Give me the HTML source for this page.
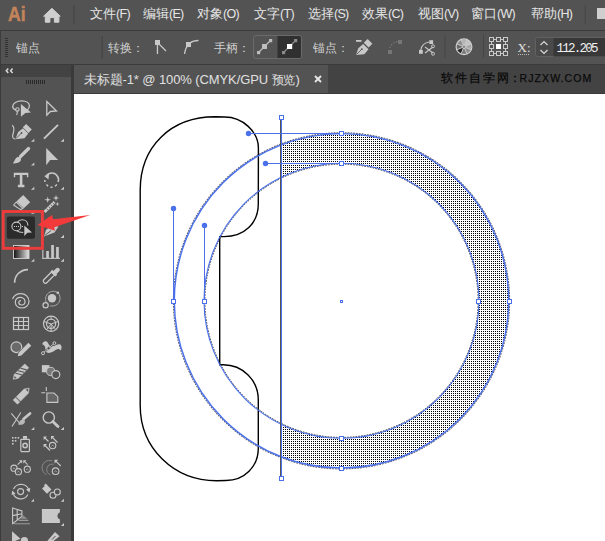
<!DOCTYPE html>
<html><head><meta charset="utf-8">
<style>
*{margin:0;padding:0;box-sizing:border-box}
html,body{width:605px;height:541px;overflow:hidden;background:#383838;font-family:"Liberation Sans",sans-serif}
.abs{position:absolute}
#menubar{left:0;top:0;width:605px;height:30px;background:#535353}
#ctrl{left:0;top:31px;width:605px;height:33px;background:#535353;border-left:1px solid #3d3d3d}
.mi{position:absolute;top:5.5px;font-size:12.5px;color:#e6e6e6;white-space:nowrap;line-height:16px}
.ct{position:absolute;top:39.5px;font-size:12px;color:#d0d0d0;white-space:nowrap;line-height:16px}
#tbhead{left:1px;top:65px;width:70px;height:12px;background:#434343}
#tbbody{left:1px;top:77px;width:70px;height:464px;background:#535353}
#tabbar{left:74px;top:65px;width:531px;height:28px;background:#434343}
#tab{left:74px;top:65px;width:254px;height:28px;background:#535353}
#canvas{left:74px;top:94px;width:531px;height:447px;background:#fff}
svg{position:absolute;left:0;top:0}
.lt{font-size:12.5px;letter-spacing:-0.7px}
</style></head><body>
<div id="menubar" class="abs"></div>
<div id="ctrl" class="abs"></div>
<div id="tbhead" class="abs"></div>
<div id="tbbody" class="abs"></div>
<div id="tabbar" class="abs"></div>
<div id="tab" class="abs"></div>
<div id="canvas" class="abs"></div>

<!-- menu -->
<div class="abs" style="left:8px;top:0.5px;font-size:21px;color:#c4845a;font-weight:bold;transform-origin:0 0;transform:scaleX(0.84);-webkit-text-stroke:0.5px #c4845a;line-height:25px">Ai</div>
<div class="mi" style="left:90px">文件<span class="lt">(F)</span></div>
<div class="mi" style="left:143px">编辑<span class="lt">(E)</span></div>
<div class="mi" style="left:197px">对象<span class="lt">(O)</span></div>
<div class="mi" style="left:254px">文字<span class="lt">(T)</span></div>
<div class="mi" style="left:308px">选择<span class="lt">(S)</span></div>
<div class="mi" style="left:362px">效果<span class="lt">(C)</span></div>
<div class="mi" style="left:418px">视图<span class="lt">(V)</span></div>
<div class="mi" style="left:471px">窗口<span class="lt">(W)</span></div>
<div class="mi" style="left:531px">帮助<span class="lt">(H)</span></div>

<!-- control bar text -->
<div class="ct" style="left:15.5px">锚点</div>
<div class="ct" style="left:108.2px">转换：</div>
<div class="ct" style="left:214px">手柄：</div>
<div class="ct" style="left:312.5px">锚点：</div>

<!-- tab text -->
<div class="abs" style="left:83.8px;top:71.5px;font-size:13px;color:#e0e0e0;white-space:nowrap;letter-spacing:-0.1px"><span style="font-size:12.5px">未标题</span>-1* @ 100% (CMYK/GPU <span style="font-size:12px">预览</span>)</div>
<div class="abs" style="left:441px;top:71px;font-size:11.5px;color:#0a0a0a;white-space:nowrap;letter-spacing:2px;line-height:14px;-webkit-text-stroke:0.25px #0a0a0a">软件自学网<span style="letter-spacing:-1px;margin-left:-2.5px">：</span><span style="font-size:10.5px;letter-spacing:1.1px">RJZXW.COM</span></div>

<!-- chrome svg (menubar/control icons) -->
<svg width="605" height="541" viewBox="0 0 605 541">
  <!-- menubar -->
  <path d="M43.6 16.2 L51.9 8.3 L60.2 16.2 H58.9 V22.2 H54.4 V17.6 H49.9 V22.2 H45.3 V16.2Z" fill="#cfcfcf" stroke="#cfcfcf" stroke-width="1" stroke-linejoin="round"/>
  <rect x="73" y="5" width="2" height="19.5" fill="#4a4a4a"/>
  <rect x="584.5" y="5" width="1.5" height="19.5" fill="#4a4a4a"/>
  <rect x="597" y="8" width="8" height="11" fill="#cfcfcf"/>
  <rect x="0" y="30" width="605" height="1" fill="#3b3b3b"/>
  <rect x="0" y="64" width="605" height="1" fill="#3b3b3b"/><rect x="74" y="93" width="531" height="1" fill="#3a3a3a"/>
  <!-- grip -->
  <g fill="#333"><rect x="5" y="38" width="3" height="1"/><rect x="5" y="40" width="3" height="1"/><rect x="5" y="42" width="3" height="1"/><rect x="5" y="44" width="3" height="1"/><rect x="5" y="46" width="3" height="1"/><rect x="5" y="48" width="3" height="1"/><rect x="5" y="50" width="3" height="1"/><rect x="5" y="52" width="3" height="1"/><rect x="5" y="54" width="3" height="1"/><rect x="5" y="56" width="3" height="1"/></g>
  <rect x="101.5" y="36" width="1.5" height="23" fill="#474747"/>
  <!-- convert icons -->
  <g fill="#c8c8c8" stroke="none">
    <rect x="155" y="40" width="5" height="5"/>
    <rect x="156.8" y="44" width="1.3" height="10"/>
  </g>
  <path d="M159 44 L166 51" stroke="#c8c8c8" stroke-width="1.3"/>
  <rect x="186" y="42" width="5" height="5" fill="#c8c8c8"/>
  <path d="M184.5 54 Q185.5 48 187.5 46 M190 43 Q193 40.5 198.5 40.5" stroke="#c8c8c8" stroke-width="1.3" fill="none"/>
  <!-- handle group -->
  <rect x="253.5" y="35.5" width="48" height="23" rx="2.5" fill="none" stroke="#6a6a6a"/>
  <path d="M277.5 36 H299 Q301 36 301 38 V56 Q301 58 299 58 H277.5Z" fill="#303030"/>
  <path d="M258.5 52.5 L270.5 40.5" stroke="#bdbdbd" stroke-width="1.2"/>
  <rect x="257" y="51" width="3.2" height="3.2" fill="#bdbdbd"/>
  <rect x="262" y="44" width="5" height="5" fill="#bdbdbd"/>
  <rect x="269" y="39" width="3.2" height="3.2" fill="#bdbdbd"/>
  <path d="M283.5 52.5 L295.5 40.5" stroke="#8a8a8a" stroke-width="1.2"/>
  <rect x="282" y="51" width="3.2" height="3.2" fill="#8a8a8a"/>
  <rect x="294" y="39" width="3.2" height="3.2" fill="#8a8a8a"/>
  <rect x="287" y="44" width="5.2" height="5" fill="#ffffff"/>
  <!-- pen minus -->
  <rect x="356" y="40" width="5.5" height="1.8" fill="#c8c8c8"/>
  <path d="M356 55 L358.3 48.2 L363.2 44 L368.5 49.3 L364.3 54.2Z" fill="#c8c8c8"/>
  <path d="M363.8 42.8 L367.6 39 L372.4 43.8 L368.6 47.6Z" fill="#c8c8c8"/>
  <path d="M356.5 54.5 L361.5 49.5" stroke="#535353" stroke-width="0.9"/>
  <circle cx="361.8" cy="49.2" r="0.9" fill="#535353"/>
  <!-- disabled dotted curve -->
  <g fill="#777777"><rect x="388" y="50" width="4" height="4"/><rect x="398" y="40" width="4" height="4"/><rect x="389.5" y="46.5" width="1.3" height="1.3"/><rect x="391" y="44" width="1.3" height="1.3"/><rect x="393.5" y="42" width="1.3" height="1.3"/><rect x="396" y="41" width="1.3" height="1.3"/></g>
  <!-- curve scissors -->
  <rect x="419" y="50" width="3.8" height="3.8" fill="#c8c8c8"/>
  <rect x="429.3" y="40.2" width="3.8" height="3.8" fill="#c8c8c8"/>
  <path d="M420.8 50 Q422 43 429.3 42" stroke="#c8c8c8" stroke-width="1.2" fill="none"/>
  <path d="M425 47 L433 53 M425 53 L433 47" stroke="#c8c8c8" stroke-width="1.1"/>
  <circle cx="433" cy="46.3" r="1.5" fill="none" stroke="#c8c8c8" stroke-width="1"/>
  <circle cx="433" cy="53.7" r="1.5" fill="none" stroke="#c8c8c8" stroke-width="1"/>
  <rect x="444.5" y="35" width="1" height="23" fill="#464646"/>
  <!-- globe -->
  <path d="M464.0 46.8 L461.09 39.78 A7.6 7.6 0 0 1 466.91 39.78Z" fill="#b4b4b4"/>
  <path d="M464.0 46.8 L466.91 39.78 A7.6 7.6 0 0 1 471.02 43.89Z" fill="#c4c4c4"/>
  <path d="M464.0 46.8 L471.02 43.89 A7.6 7.6 0 0 1 471.02 49.71Z" fill="#a8a8a8"/>
  <path d="M464.0 46.8 L471.02 49.71 A7.6 7.6 0 0 1 466.91 53.82Z" fill="#8e8e8e"/>
  <path d="M464.0 46.8 L466.91 53.82 A7.6 7.6 0 0 1 461.09 53.82Z" fill="#7a7a7a"/>
  <path d="M464.0 46.8 L461.09 53.82 A7.6 7.6 0 0 1 456.98 49.71Z" fill="#262626"/>
  <path d="M464.0 46.8 L456.98 49.71 A7.6 7.6 0 0 1 456.98 43.89Z" fill="#6a6a6a"/>
  <path d="M464.0 46.8 L456.98 43.89 A7.6 7.6 0 0 1 461.09 39.78Z" fill="#8c8c8c"/>
  <path d="M463.31 45.14 L461.09 39.78 M464.69 45.14 L466.91 39.78 M465.66 46.11 L471.02 43.89 M465.66 47.49 L471.02 49.71 M464.69 48.46 L466.91 53.82 M463.31 48.46 L461.09 53.82 M462.34 47.49 L456.98 49.71 M462.34 46.11 L456.98 43.89 " stroke="#d0d0d0" stroke-width="0.9"/>
  <circle cx="464.0" cy="46.8" r="7.8999999999999995" fill="none" stroke="#d0d0d0" stroke-width="1.2"/>
  <circle cx="464.0" cy="46.8" r="1.8" fill="#8a8a8a" stroke="#d0d0d0" stroke-width="0.9"/>
  <rect x="483" y="35" width="1" height="23" fill="#464646"/>
  <!-- ref point grid -->
  <g fill="none" stroke="#c8c8c8" stroke-width="1">
    <rect x="489.5" y="37.5" width="4" height="4"/><rect x="496.5" y="37.5" width="4" height="4"/><rect x="503.5" y="37.5" width="4" height="4"/>
    <rect x="489.5" y="44.5" width="4" height="4"/><rect x="503.5" y="44.5" width="4" height="4"/>
    <rect x="489.5" y="51.5" width="4" height="4"/><rect x="496.5" y="51.5" width="4" height="4"/><rect x="503.5" y="51.5" width="4" height="4"/>
  </g>
  <path d="M493.5 39.5 H496.5 M500.5 39.5 H503.5 M493.5 53.5 H496.5 M500.5 53.5 H503.5 M491.5 41.5 V44.5 M491.5 48.5 V51.5 M505.5 41.5 V44.5 M505.5 48.5 V51.5" stroke="#c8c8c8" stroke-width="1"/>
  <rect x="496" y="44" width="5" height="5" fill="#ffffff"/>
  <!-- X: -->
  <text x="517.5" y="52" font-family="Liberation Serif" font-size="13" fill="#e0e0e0">X:</text>
  <path d="M518 54.5 H529" stroke="#bbbbbb" stroke-width="1" stroke-dasharray="1 1"/>
  <!-- spinner + input -->
  <rect x="535.5" y="37.5" width="70" height="19" rx="2" fill="#4a4a4a" stroke="#616161"/>
  <rect x="553.5" y="38" width="52" height="18.5" fill="#383838"/>
  <path d="M540.5 45 L544 41.5 L547.5 45 M540.5 50 L544 53.5 L547.5 50" stroke="#d8d8d8" stroke-width="1.2" fill="none"/>
  <text x="556.5" y="51.5" font-family="Liberation Mono" font-size="12.5" fill="#f0f0f0" textLength="42">112.205</text>

  <!-- toolbar header -->
  <rect x="0" y="64" width="1" height="477" fill="#3b3b3b"/>
  <rect x="71" y="65" width="3" height="476" fill="#3a3a3a"/>
  <path d="M8.3 68.6 L6.3 70.8 L8.3 73 M12.6 68.6 L10.6 70.8 L12.6 73" stroke="#d8d8d8" stroke-width="1.5" fill="none"/>
  <g fill="#2a2a2a"><rect x="26" y="80" width="1" height="4"/><rect x="28" y="80" width="1" height="4"/><rect x="30" y="80" width="1" height="4"/><rect x="32" y="80" width="1" height="4"/><rect x="34" y="80" width="1" height="4"/><rect x="36" y="80" width="1" height="4"/><rect x="38" y="80" width="1" height="4"/><rect x="40" y="80" width="1" height="4"/><rect x="42" y="80" width="1" height="4"/><rect x="44" y="80" width="1" height="4"/></g>
  <!-- tab close -->
  <path d="M315 76 L321 82 M321 76 L315 82" stroke="#e8e8e8" stroke-width="1.8"/>
</svg>

<!-- toolbar icons -->
<svg width="605" height="541" viewBox="0 0 605 541">
<g fill="#c8c8c8" stroke="none">
  <!-- small corner triangles -->
  <path d="M31 141.8 L34.3 138.7 V141.8Z M60.6 141.8 L64 138.7 V141.8Z"/>
  <path d="M31 165.6 L34.3 162.5 V165.6Z"/>
  <path d="M31 189.8 L34.3 186.7 V189.8Z M60.6 189.8 L64 186.7 V189.8Z"/>
  <path d="M31 213.8 L34.3 210.7 V213.8Z M60.6 237.9 L64 234.7 V237.9Z"/>
  <path d="M31 261.8 L34.3 258.7 V261.8Z M60.6 261.8 L64 258.7 V261.8Z"/>
  <path d="M31 430 L34.3 427 V430Z M60.6 430 L64 427 V430Z"/>
  <path d="M31 501.8 L34 498.8 V501.8Z M60.9 501.8 L64 498.8 V501.8Z"/>
  <path d="M60.9 526 L64 523 V526Z"/>
</g>
<!-- Row1: lasso w/ arrow -->
<path d="M16 110.2 C14 109.5 12.7 108.3 12.7 106.6 C12.7 103.2 16.8 100.9 21.6 100.9 C26.3 100.9 29.4 103 29.4 105.8 C29.4 107.6 28.6 109 27.2 110.3" fill="none" stroke="#c8c8c8" stroke-width="1.3"/>
<circle cx="17.4" cy="109.4" r="1.7" fill="none" stroke="#c8c8c8" stroke-width="1.1"/>
<path d="M17 111 Q18 113 16.5 115" fill="none" stroke="#c8c8c8" stroke-width="1.2"/>
<path d="M20.9 103.9 L31 112.4 L25.4 112.9 L20.9 116.8Z" fill="#c8c8c8"/>
<!-- direct selection -->
<path d="M46.8 101.5 L56.5 111 L50.4 111.5 L46.8 115.2Z" fill="none" stroke="#c8c8c8" stroke-width="1.3" stroke-linejoin="miter"/>
<!-- Row2: pen -->
<path d="M12.2 125.3 C14.5 127 14 131 13 134 C12 137 13 139 15.2 139" fill="none" stroke="#c8c8c8" stroke-width="1.2"/>
<path d="M15.2 139.3 L18.2 132 L23 128.3 L28.2 133.5 L24.5 138.2Z" fill="#c8c8c8"/>
<path d="M22.8 127.3 L26.2 124 L31.8 129.6 L28.4 133Z" fill="#c8c8c8"/>
<path d="M15.8 138.7 L21.2 133.3" stroke="#535353" stroke-width="0.9"/>
<circle cx="21.5" cy="133" r="0.9" fill="#535353"/>
<!-- line -->
<path d="M44 138.6 L58 124.9" stroke="#c8c8c8" stroke-width="1.9"/>
<!-- Row3: brush -->
<path d="M20.5 156.5 L28.6 148.5" stroke="#c8c8c8" stroke-width="3.2" stroke-linecap="round"/>
<path d="M13 163.4 C14.5 161 15.5 157.5 18 157 C20.5 156.5 21.5 158.5 20.8 160.5 C19.5 163 16 163.5 13 163.4Z" fill="#c8c8c8"/>
<!-- solid arrow -->
<path d="M46.2 148 L58.1 159.9 L50.2 159.9 L46.2 165.3Z" fill="#c8c8c8"/>
<!-- Row4: T -->
<path d="M13.8 172.8 H28.3 V177.3 H26.9 V175 H22.4 V184.7 H24.4 V187.2 H17.9 V184.7 H19.8 V175 H15.2 V177.3 H13.8Z" fill="#c8c8c8"/>
<!-- rotate -->
<path d="M46.5 175.5 C49 172.5 54 172 56.5 175 C59 178 58.5 181 58 182" fill="none" stroke="#c8c8c8" stroke-width="1.6"/>
<path d="M44.2 176 L49 174 L48.5 179.5Z" fill="#c8c8c8"/>
<path d="M57 184.5 L55 186.3 M52.5 187.3 L50.5 187.3 M48 186.3 L46.5 184.5 M45 182 L44.8 180" stroke="#c8c8c8" stroke-width="1.4"/>
<!-- Row5: eraser -->
<path d="M23.2 195 L30.2 202.3 L23.8 208.2 L16.6 201.2Z" fill="#c8c8c8"/>
<path d="M16.3 202 L23 208.6 L20.6 209.6 L13.6 205Z" fill="none" stroke="#c8c8c8" stroke-width="1.1" stroke-linejoin="round"/>
<!-- magic wand -->
<path d="M44.5 212 L54.5 202" stroke="#c8c8c8" stroke-width="2.8"/>
<path d="M46.5 208.5 L48 210 M48.5 206.5 L50 208 M50.5 204.5 L52 206 M52.5 202.5 L54 204" stroke="#535353" stroke-width="0.7"/>
<path d="M47.70 196.50 L48.41 199.09 L51.00 199.80 L48.41 200.51 L47.70 203.10 L46.99 200.51 L44.40 199.80 L46.99 199.09Z M56.00 194.80 L56.71 197.29 L59.20 198.00 L56.71 198.71 L56.00 201.20 L55.29 198.71 L52.80 198.00 L55.29 197.29Z M57.40 201.80 L57.97 203.43 L59.60 204.00 L57.97 204.57 L57.40 206.20 L56.83 204.57 L55.20 204.00 L56.83 203.43Z" fill="#c8c8c8"/>
<!-- Row6: selected -->
<rect x="6.8" y="216.6" width="28.2" height="22.2" rx="2" fill="#2b2b2b"/>
<ellipse cx="16.4" cy="226.4" rx="4.5" ry="4.3" fill="none" stroke="#c8c8c8" stroke-width="1.1"/>
<path d="M17.6 222.1 C18.6 220.3 20.2 219.7 22.2 219.7 C25.6 219.7 27.9 222.2 27.9 225.6 M16.8 230.9 C18.3 232.1 20.5 232.5 23.2 232.5" fill="none" stroke="#c8c8c8" stroke-width="1.1"/>
<g fill="#d0d0d0"><rect x="14" y="226" width="1" height="1"/><rect x="16" y="226" width="1" height="1"/><rect x="18" y="226" width="1" height="1"/><rect x="22" y="226" width="1" height="1"/></g>
<path d="M24.3 225.4 L32 232.5 L27.4 232.7 L24.3 236Z" fill="#c8c8c8"/>
<!-- blob brush (right of selected) -->
<path d="M44 236.5 L46 230 L51.5 225.5 L58.5 226.5 L54.5 232.5Z" fill="#c8c8c8"/>
<path d="M44.8 235.5 L51 230.5" stroke="#535353" stroke-width="0.9"/>
<!-- Row7: gradient -->
<defs><linearGradient id="gr" x1="0" x2="1" y1="0" y2="0"><stop offset="0" stop-color="#111"/><stop offset="1" stop-color="#e6e6e6"/></linearGradient></defs>
<rect x="13.5" y="245.5" width="15.5" height="13" fill="url(#gr)" stroke="#c8c8c8" stroke-width="1"/>
<!-- bar chart -->
<g fill="#c8c8c8"><rect x="42.3" y="249.5" width="1.1" height="9.3"/><rect x="42.3" y="257.8" width="17.7" height="1.1"/><rect x="46.2" y="251" width="2.7" height="7"/><rect x="51.2" y="245" width="2.7" height="13"/><rect x="56.1" y="247" width="2.7" height="11"/></g>
<!-- Row8: arc -->
<path d="M14.6 282.8 C14.6 275.5 20 269.8 28 269.6" fill="none" stroke="#c8c8c8" stroke-width="1.6"/>
<!-- eyedropper -->
<path d="M44.5 283 C43 282 43 280.5 44 279.5 L51.5 272 L54.5 275 L47 282.5 C46 283.5 45 283.5 44.5 283Z" fill="none" stroke="#c8c8c8" stroke-width="1.3"/>
<path d="M50.5 271.5 L55.5 276.5 L57.2 274.8 L52.2 269.8Z M53.5 271 L56 268.5 C57 267.5 58.5 267.5 59.3 268.5 C60 269.3 60 270.5 59 271.5 L56.5 274Z" fill="#c8c8c8"/>
<!-- Row9: spiral -->
<path d="M12.5 299 C14 295.5 17.5 293.5 21.5 293.7 C26 294 29 297.5 29 301.5 C29 305.5 25.5 308 21.8 308 C18 308 15.3 305.5 15.3 302 C15.3 299 17.7 297.2 20.5 297.3 C23.2 297.4 25 299.5 25 301.8 C25 304 23.2 305 21.5 305 C19.8 305 18.8 303.8 18.8 302.3 C18.8 301 19.8 300.5 21 300.6" fill="none" stroke="#c8c8c8" stroke-width="1.2"/>
<!-- planet -->
<circle cx="52" cy="298.3" r="4.2" fill="#c8c8c8"/>
<path d="M47.8 304.5 C45 302 44.8 297 47.5 293.8 C50.5 290.5 56 290.5 58.5 293.5 C61 296.5 60.5 302 57 304.5 C55 306 52 306.3 50 305.8" fill="none" stroke="#a8a8a8" stroke-width="1"/>
<circle cx="45.6" cy="305.2" r="2.6" fill="#535353" stroke="#c8c8c8" stroke-width="1.2"/>
<circle cx="57.8" cy="292.8" r="1.3" fill="#c8c8c8"/>
<!-- Row10: grid -->
<g fill="none" stroke="#c8c8c8" stroke-width="1.2">
<rect x="13.5" y="317.5" width="15" height="12"/>
<path d="M13.5 321.5 H28.5 M13.5 325.5 H28.5 M18.5 317.5 V329.5 M23.5 317.5 V329.5"/>
</g>
<!-- polar grid -->
<g fill="none" stroke="#c8c8c8" stroke-width="1.2">
<circle cx="51.1" cy="323.8" r="7.6"/>
<circle cx="51.1" cy="323.8" r="4.6"/>
<path d="M51.1 324 V331.4 M44 321.5 L51.1 324 L58.2 321.5 M46.5 329.5 L51.1 324 L55.7 329.5 M51.1 316.2 V319.2" stroke-width="1"/>
</g>
<!-- Row11: shaper -->
<circle cx="16.4" cy="347.2" r="5.4" fill="#6a6a6a" stroke="#c8c8c8" stroke-width="1.2"/>
<path d="M17.80 356.30 L18.51 352.76 L28.41 342.86 L31.24 345.69 L21.34 355.59Z" fill="#c8c8c8" stroke="#535353" stroke-width="1.2" stroke-linejoin="round"/>
<path d="M17.80 356.30 L18.51 352.76 L28.41 342.86 L31.24 345.69 L21.34 355.59Z" fill="#c8c8c8"/>
<!-- puppet warp -->
<path d="M42.3 344.3 C42.8 341 46.8 340 48 343 C48.8 345 50.2 346.6 53 346.1 C56 345.6 57.6 343.4 60.2 344.4 C62.2 345.4 61.8 349 60.6 350.6 C59.6 348.6 57.6 348.6 55.6 350.1 C53.1 352.1 50 353.6 47 352.6 C44.6 351.6 45.6 348.6 45.1 347.1 C44.6 345.6 43.6 344.9 42.3 344.3Z" fill="#c8c8c8"/>
<path d="M43.2 352.8 L54.3 343.2" stroke="#535353" stroke-width="2"/>
<path d="M43.2 352.8 L54.3 343.2" stroke="#c8c8c8" stroke-width="0.9"/>
<circle cx="43" cy="353.2" r="1.5" fill="#535353" stroke="#c8c8c8" stroke-width="1"/>
<circle cx="48.6" cy="348.3" r="1.7" fill="#535353" stroke="#c8c8c8" stroke-width="1"/>
<circle cx="54.4" cy="343.1" r="1.4" fill="#535353" stroke="#c8c8c8" stroke-width="1"/>
<!-- Row12: smooth pencil -->
<path d="M13.30 379.30 L14.18 374.53 L24.79 363.92 L28.68 367.81 L18.07 378.42Z" fill="#c8c8c8" stroke="#c8c8c8" stroke-width="0.6" stroke-linejoin="round"/>
<path d="M15.53 373.18 L21.68 374.81 M18.00 370.71 L24.15 372.33 M20.48 368.23 L26.63 369.86 " stroke="#535353" stroke-width="1.1"/>
<path d="M14.22 378.38 L16.55 378.03 L14.57 376.05Z" fill="#535353"/>
<!-- live paint -->
<rect x="41.9" y="365.1" width="7.5" height="7.2" fill="#c8c8c8"/>
<circle cx="50.7" cy="371.4" r="4.1" fill="#777" stroke="#c8c8c8" stroke-width="1"/>
<circle cx="55.8" cy="374.6" r="4" fill="#535353" stroke="#c8c8c8" stroke-width="1.2"/>
<!-- Row13: pencil -->
<path d="M29.20 388.20 L24.11 389.05 L16.33 396.83 L20.57 401.07 L28.35 393.29Z M15.48 397.68 L13.22 399.94 L17.46 404.18 L19.72 401.92Z" fill="#c8c8c8" stroke="#c8c8c8" stroke-width="0.6" stroke-linejoin="round"/>
<path d="M28.35 389.05 L27.93 391.74 L25.66 389.47Z" fill="#535353"/>
<!-- artboard -->
<path d="M46.3 387 V391 M41.3 392.7 H45.3" stroke="#c8c8c8" stroke-width="1.1"/>
<path d="M46.9 393 H54 L57.8 396.7 V402.4 H46.9Z" fill="#666" stroke="#c8c8c8" stroke-width="1.1"/>
<!-- Row14: scissor+brush -->
<path d="M11.3 413.3 L19 422.5 M20.8 412.5 L12 426.5" stroke="#c8c8c8" stroke-width="1.1"/>
<path d="M23.5 419 L30 413.5" stroke="#c8c8c8" stroke-width="2.8" stroke-linecap="round"/>
<path d="M18 424.5 C19 421.5 20.5 419.5 23 419.5 C25 419.5 25.5 421.5 24.5 423 C23 425 20.5 425 18 424.5Z" fill="#b8b8b8"/>
<!-- zoom -->
<circle cx="48.8" cy="417.5" r="5.6" fill="none" stroke="#c8c8c8" stroke-width="1.4"/>
<path d="M52.8 421.6 L58 426.6" stroke="#c8c8c8" stroke-width="2.8" stroke-linecap="round"/>
<!-- Row15: spray -->
<g fill="#c8c8c8"><rect x="12" y="437" width="1.6" height="1.6"/><rect x="14.8" y="437" width="1.6" height="1.6"/><rect x="17.6" y="437" width="1.6" height="1.6"/><rect x="12" y="440" width="1.6" height="1.6"/><rect x="14.8" y="440" width="1.6" height="1.6"/><rect x="12" y="443" width="1.6" height="1.6"/><rect x="23" y="436" width="4" height="2.8"/></g>
<rect x="20.8" y="439.3" width="8.6" height="12.3" rx="0.8" fill="none" stroke="#c8c8c8" stroke-width="1.2"/>
<circle cx="25.1" cy="445.5" r="2.2" fill="none" stroke="#c8c8c8" stroke-width="1.4"/>
<!-- shifter -->
<g stroke="#c8c8c8" stroke-width="1.1" fill="none">
<path d="M44.5 437.5 L48.5 441.5 M52 437 L57.5 442.5 M44.5 445 L50 450.5"/>

</g>
<path d="M43.6 436.6 H47 L43.6 440Z M51 436 H54.4 L51 439.4Z M43.6 444 H47 L43.6 447.4Z" fill="#c8c8c8"/>
<circle cx="52.6" cy="445.6" r="3.2" fill="#535353" stroke="#c8c8c8" stroke-width="1.1"/><path d="M51.4 446.20000000000005 Q52.6 444.40000000000003 53.800000000000004 446.20000000000005" fill="none" stroke="#c8c8c8" stroke-width="0.7"/>
<!-- Row16: scrunch -->
<circle cx="14" cy="468.2" r="3.1" fill="#535353" stroke="#c8c8c8" stroke-width="1.1"/><path d="M12.8 468.8 Q14 467.0 15.2 468.8" fill="none" stroke="#c8c8c8" stroke-width="0.7"/><circle cx="18.4" cy="471.7" r="3.1" fill="#535353" stroke="#c8c8c8" stroke-width="1.1"/><path d="M17.2 472.3 Q18.4 470.5 19.599999999999998 472.3" fill="none" stroke="#c8c8c8" stroke-width="0.7"/><circle cx="27.3" cy="469.2" r="3.1" fill="#535353" stroke="#c8c8c8" stroke-width="1.1"/><path d="M26.1 469.8 Q27.3 468.0 28.5 469.8" fill="none" stroke="#c8c8c8" stroke-width="0.7"/>
<path d="M17.6 464.6 L21.3 461.2 M27.6 464.6 L24.2 461.2" stroke="#c8c8c8" stroke-width="1.1"/>
<path d="M22.2 460.2 V463.4 L19 460.2Z M23.3 460.2 H26.5 L23.3 463.4Z" fill="#c8c8c8"/>
<!-- sizer -->
<path d="M46.5 474.5 C41.5 472.5 40.5 465.5 44.8 462 C47 460.3 49.8 460 52.2 460.8 M50.5 474.8 C46.8 473.5 45.5 469 48 466 C49.3 464.4 51.5 463.8 53.5 464.3" fill="none" stroke="#8a8a8a" stroke-width="1"/>
<circle cx="55.6" cy="471.2" r="3.3" fill="#535353" stroke="#c8c8c8" stroke-width="1.1"/><path d="M54.4 471.8 Q55.6 470.0 56.800000000000004 471.8" fill="none" stroke="#c8c8c8" stroke-width="0.7"/>
<path d="M55.5 460.8 L60.8 466" stroke="#c8c8c8" stroke-width="1.1"/>
<path d="M54.5 459.8 H58.2 L54.5 463.5Z" fill="#c8c8c8"/>
<!-- Row17: spinner -->
<path d="M13.5 489 C15 485.5 19 484 22.5 484.5 C25.5 485 27.5 487 28.5 489 M27.8 494.5 C26.5 497.5 23 499.3 19.5 498.8 C16.5 498.3 14.3 496.5 13.5 494.3" fill="none" stroke="#c8c8c8" stroke-width="1.2"/>
<path d="M26 489.5 L30.3 488 L29.5 492.5Z M15.5 493.8 L11.5 495 L12.3 490.5Z" fill="#c8c8c8"/>
<circle cx="20.6" cy="491.6" r="3" fill="none" stroke="#c8c8c8" stroke-width="1.1"/>
<!-- stainer -->
<path d="M42 488.5 L46.5 484.5 L51.5 489.5 L47 493.8Z" fill="#c8c8c8"/>
<rect x="44.5" y="484" width="2.5" height="2.5" fill="#c8c8c8" transform="rotate(45 45.7 485.2)"/>
<circle cx="53" cy="495.2" r="3" fill="#535353" stroke="#c8c8c8" stroke-width="1.1"/>
<circle cx="57.3" cy="492" r="3" fill="#535353" stroke="#c8c8c8" stroke-width="1.1"/>
<!-- Row18: perspective grid -->
<g fill="none" stroke="#c8c8c8" stroke-width="1.1">
<path d="M12.6 507.9 V523.7 L21.9 516.5 V511 Z M17.2 509.6 V519.8 M12.6 515.6 L21.9 513.7"/>
</g>
<path d="M23 515 L27.3 519 H21Z" fill="#8a8a8a"/>
<path d="M18.6 520.4 H28.4 M14 523.7 H30" stroke="#9a9a9a" stroke-width="1.1"/>
<!-- notch rect -->
<path d="M41.9 509 H59.9 V512.3 A3.9 3.9 0 0 0 59.9 519.6 V523 H41.9Z" fill="#c8c8c8"/>
<!-- Row19 partial -->
<path d="M12 531.2 L20.5 538.8 L15 541 L12 541Z" fill="#c8c8c8"/>
<circle cx="24.4" cy="540.6" r="3.6" fill="#c8c8c8"/>
<path d="M47.3 541 L55 532 L59.6 536.2 L53.5 541Z" fill="#c8c8c8"/>
<path d="M52 539.5 L55.5 536" stroke="#535353" stroke-width="1"/>
<!-- red highlight box -->
<rect x="3.2" y="211.5" width="39.2" height="36.8" fill="none" stroke="#ee3b3b" stroke-width="2.9"/>
<!-- red arrow -->
<path d="M37.5 225 L52 215 L53.2 219.2 L90.2 215 L54.3 227.2 L54.9 230.7Z" fill="#f23a3a"/>
</svg>

<!-- canvas drawing -->
<svg width="605" height="541" viewBox="0 0 605 541">
<defs><pattern id="dots" patternUnits="userSpaceOnUse" x="1" y="1" width="2" height="2"><rect x="0" y="0" width="1" height="1" fill="#000"/></pattern>
<clipPath id="rclip"><rect x="282" y="94" width="323" height="447"/></clipPath></defs>
<path d="M173.9 300.8 A167.6 167.6 0 1 1 509.1 300.8 A167.6 167.6 0 1 1 173.9 300.8Z M204.3 300.8 A137.2 137.2 0 1 0 478.7 300.8 A137.2 137.2 0 1 0 204.3 300.8Z" fill="url(#dots)" fill-rule="evenodd" clip-path="url(#rclip)"/>
<path d="M215.2 116.8 L224.8 117 C242.4 117 258.4 131.7 258.4 147.9 L258.3 203.8 C258.3 223.3 244.4 236.6 224 236.6 L219.7 236.6 L219.7 364.7 L223.2 364.7 C242.8 364.7 258.3 380.2 258.3 399.9 L258.3 448.2 C258.3 466.6 244.4 480.5 225.9 480.5 L216.6 480.7 C173.5 480.7 140.2 447.9 140.2 405.4 L140.2 190.2 C140.2 146.6 170.7 116.8 215.2 116.8Z" fill="none" stroke="#000" stroke-width="1.4"/>
<circle cx="341.5" cy="300.8" r="168.1" fill="none" stroke="#2a2a3a" stroke-width="1.1" stroke-dasharray="1.8 1" stroke-opacity="0.75"/>
<circle cx="341.5" cy="300.8" r="136.6" fill="none" stroke="#333" stroke-width="1" stroke-dasharray="1.6 1.2"/>
<circle cx="341.5" cy="300.8" r="167.2" fill="none" stroke="#4a70ec" stroke-width="1.4"/>
<circle cx="341.5" cy="300.8" r="137.5" fill="none" stroke="#4a70ec" stroke-width="1.1"/>
<g shape-rendering="crispEdges">
<rect x="280" y="120" width="1" height="356" fill="#555"/>
<rect x="281" y="120" width="1" height="356" fill="#4a70ec"/>
<rect x="248" y="133" width="93" height="1" fill="#4a70ec"/>
<rect x="265" y="163" width="76" height="1" fill="#4a70ec"/>
<rect x="173" y="208" width="1" height="93" fill="#4a70ec"/>
<rect x="204" y="225" width="1" height="76" fill="#4a70ec"/>
</g>
<circle cx="248.5" cy="133.5" r="2.7" fill="#4a70ec"/>
<circle cx="265.5" cy="163.5" r="2.7" fill="#4a70ec"/>
<circle cx="173.5" cy="208.5" r="2.7" fill="#4a70ec"/>
<circle cx="204.5" cy="225.5" r="2.7" fill="#4a70ec"/>
<g shape-rendering="crispEdges">
<rect x="339" y="131" width="5" height="5" fill="#4a70ec"/><rect x="340" y="132" width="3" height="3" fill="#fff"/>
<rect x="339" y="161" width="5" height="5" fill="#4a70ec"/><rect x="340" y="162" width="3" height="3" fill="#fff"/>
<rect x="507" y="299" width="5" height="5" fill="#4a70ec"/><rect x="508" y="300" width="3" height="3" fill="#fff"/>
<rect x="476" y="299" width="5" height="5" fill="#4a70ec"/><rect x="477" y="300" width="3" height="3" fill="#fff"/>
<rect x="171" y="299" width="5" height="5" fill="#4a70ec"/><rect x="172" y="300" width="3" height="3" fill="#fff"/>
<rect x="202" y="299" width="5" height="5" fill="#4a70ec"/><rect x="203" y="300" width="3" height="3" fill="#fff"/>
<rect x="339" y="466" width="5" height="5" fill="#4a70ec"/><rect x="340" y="467" width="3" height="3" fill="#fff"/>
<rect x="339" y="436" width="5" height="5" fill="#4a70ec"/><rect x="340" y="437" width="3" height="3" fill="#fff"/>
<rect x="279" y="115" width="5" height="5" fill="#4a70ec"/><rect x="280" y="116" width="3" height="3" fill="#fff"/>
<rect x="279" y="476" width="5" height="5" fill="#4a70ec"/><rect x="280" y="477" width="3" height="3" fill="#fff"/>
<rect x="340" y="300" width="3" height="3" fill="#4a70ec"/><rect x="341" y="301" width="1" height="1" fill="#fff"/>
</g>
</svg>
</body></html>
